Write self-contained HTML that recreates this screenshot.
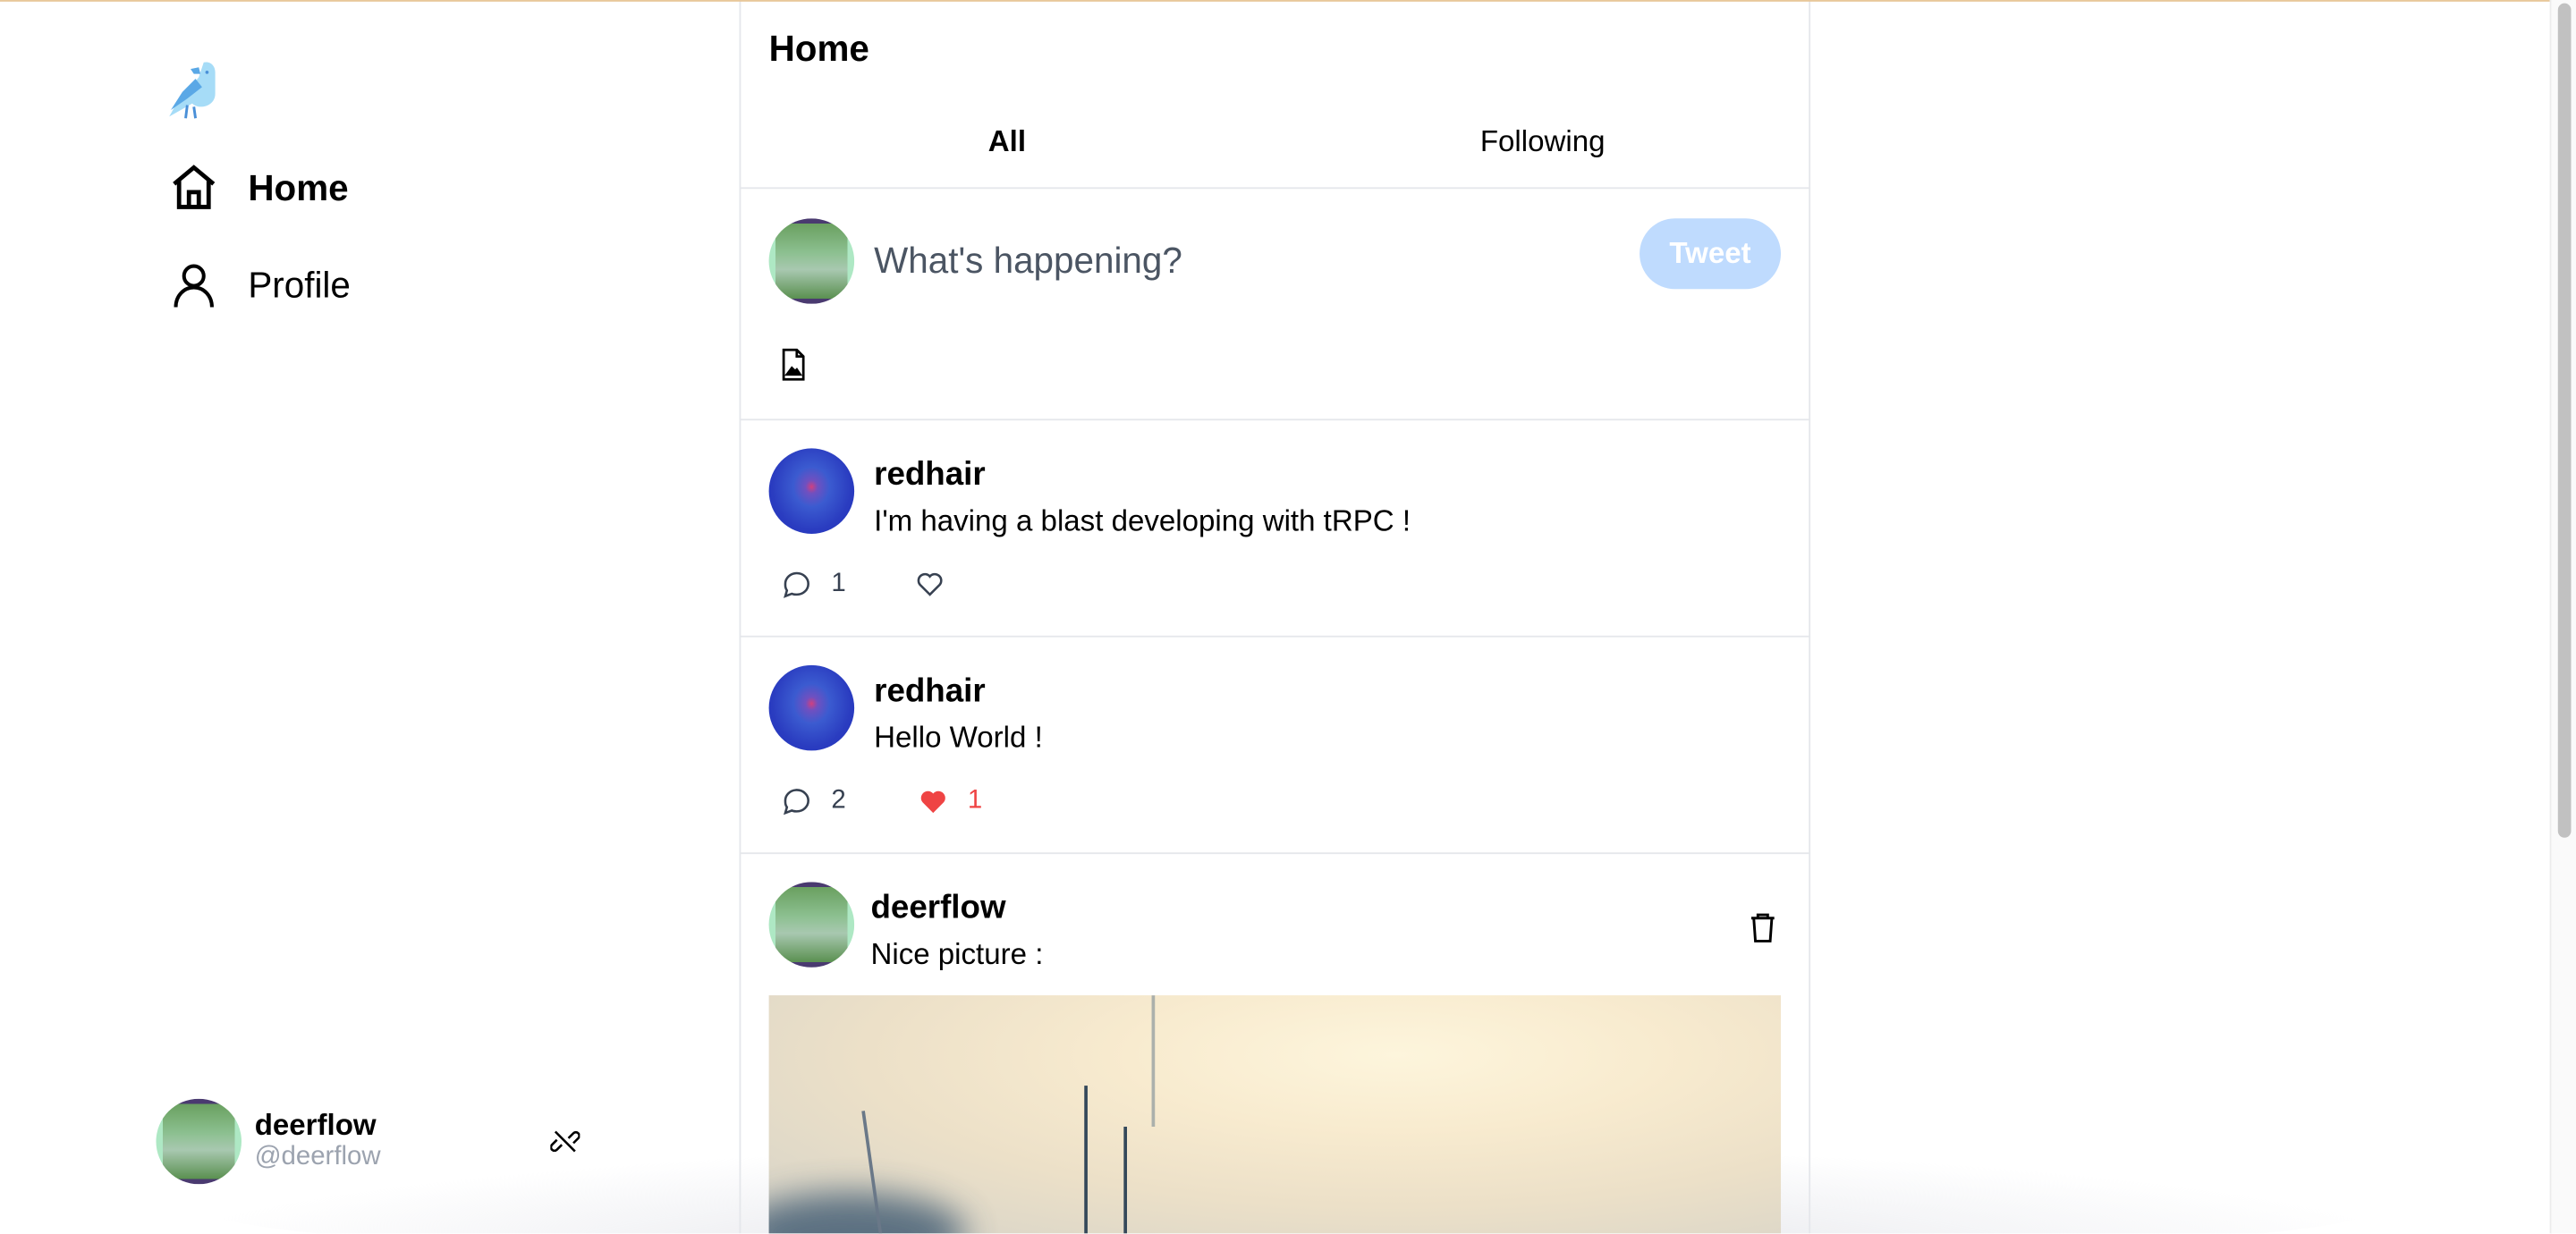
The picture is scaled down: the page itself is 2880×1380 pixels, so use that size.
<!DOCTYPE html>
<html><head><meta charset="utf-8"><style>
html,body{margin:0;padding:0;width:2880px;height:1380px;overflow:hidden;background:#fff;}
#w{position:absolute;left:0;top:0;width:1568px;height:751px;transform:scale(1.83674);transform-origin:0 0;font-family:"Liberation Sans",sans-serif;color:#000;overflow:hidden;}
.a{position:absolute;}
.av{position:absolute;width:52px;height:52px;border-radius:50%;overflow:hidden;}
.green{background:linear-gradient(90deg,#aee8c4 0,#aee8c4 8%,transparent 8%,transparent 92%,#aee8c4 92%),linear-gradient(#4a3a70 0,#4a3a70 6%,#6aa060 6%,#8cc090 40%,#a8c8b0 60%,#5a9050 94%,#4a3a70 94%);}
.blue{background:radial-gradient(ellipse at 50% 45%,#d04080 0,#7050c0 10%,#3b5bd0 30%,#2a3cc0 65%,#2233bb 100%);}
.hl{position:absolute;left:450px;width:652px;height:1px;background:#e5e7eb;}
</style></head><body><div id="w">
<!-- bird -->
<svg class="a" style="left:102px;top:37px" width="34" height="37" viewBox="0 0 34 37"><path d="M22 1c4-1 7 2 7 6v13c0 5-4 8-9 8-2 0-4-1-5-2L1 34l5-9 8-9 5-6z" fill="#a6dcf7"/><path d="M19 4l-5 1 2 3 4 0z" fill="#5aa8e6"/><path d="M17 11l-8 8-7 11 10-7 9-7z" fill="#5aa8e6"/><path d="M12 27l-1 8M16 28l1 7" stroke="#4a90d8" stroke-width="1.6"/><circle cx="24" cy="7" r="1" fill="#4a90d8"/></svg>
<!-- home icon -->
<svg class="a" style="left:103px;top:100px" width="30" height="28" viewBox="0 0 30 28" fill="none" stroke="#000" stroke-width="2.6"><path d="M3 12L15 2l12 10M6 10v16h18V10M12 26v-9h6v9"/></svg>
<div class="a" style="left:151px;top:102px;font-size:22px;font-weight:bold">Home</div>
<svg class="a" style="left:105px;top:160px" width="26" height="28" viewBox="0 0 26 28" fill="none" stroke="#000" stroke-width="2.2"><circle cx="13" cy="8" r="6"/><path d="M2 27c0-7 5-12 11-12s11 5 11 12"/></svg>
<div class="a" style="left:151px;top:161px;font-size:22px">Profile</div>
<!-- bottom shading -->
<div class="a" style="left:120px;top:700px;width:1330px;height:70px;border-radius:50%;background:radial-gradient(ellipse at 50% 100%,rgba(215,216,222,.8) 0,rgba(235,236,240,.5) 50%,rgba(255,255,255,0) 75%)"></div>
<!-- bottom user -->
<div class="av green" style="left:95px;top:669px"></div>
<div class="a" style="left:155px;top:675px;font-size:18px;font-weight:bold">deerflow</div>
<div class="a" style="left:155px;top:696px;font-size:16px;color:#9ca3af">@deerflow</div>
<svg class="a" style="left:335px;top:686px" width="18" height="18" viewBox="0 0 18 18" fill="none" stroke="#000" stroke-width="1.4"><path d="M7 11l-3 3a2 2 0 0 1-3-3l3-3M11 7l3-3a2 2 0 0 1 3 3l-3 3M3 3l12 12"/></svg>
<!-- center column -->
<div class="a" style="left:450px;top:0;width:652px;height:606px;background:#fff"></div>
<div class="a" style="left:450px;top:0;width:1px;height:751px;background:#e5e7eb"></div>
<div class="a" style="left:1101px;top:0;width:1px;height:751px;background:#e5e7eb"></div>
<div class="a" style="left:0;top:0;width:1568px;height:1px;background:#e8c79a"></div>
<div class="a" style="left:468px;top:17px;font-size:22px;font-weight:bold">Home</div>
<div class="a" style="left:450px;top:76px;width:326px;text-align:center;font-size:18px;font-weight:bold">All</div>
<div class="a" style="left:776px;top:76px;width:326px;text-align:center;font-size:18px">Following</div>
<div class="hl" style="top:114px"></div>
<div class="av green" style="left:468px;top:133px"></div>
<div class="a" style="left:532px;top:146px;font-size:22px;color:#4b5563">What's happening?</div>
<div class="a" style="left:998px;top:133px;width:86px;height:43px;border-radius:22px;background:#bfdbfe;color:#fff;font-size:18px;font-weight:bold;text-align:center;line-height:43px">Tweet</div>
<svg class="a" style="left:475px;top:212px" width="16" height="20" viewBox="0 0 16 20" fill="none" stroke="#000" stroke-width="1.5"><path d="M2 1h8l4 4v14H2z M10 1v4h4"/><path d="M4 16l3-4 2 2 1-1 2 3z" fill="#000"/></svg>
<div class="hl" style="top:255px"></div>
<!-- tweet1 -->
<div class="av blue" style="left:468px;top:273px"></div>
<div class="a" style="left:532px;top:278px;font-size:20px;font-weight:bold">redhair</div>
<div class="a" style="left:532px;top:307px;font-size:18px">I'm having a blast developing with tRPC !</div>
<svg class="a" style="left:476px;top:347px" width="18" height="18" viewBox="0 0 18 18" fill="none" stroke="#374151" stroke-width="1.4"><path d="M9 2c4 0 7 3 7 6.5S13 15 9 15c-1 0-2 0-3-.5L2 16l1-3.5C2 11 2 10 2 8.5 2 5 5 2 9 2z"/></svg>
<div class="a" style="left:506px;top:347px;font-size:16px;color:#374151">1</div>
<svg class="a" style="left:558px;top:348px" width="16" height="15" viewBox="0 0 16 15" fill="none" stroke="#374151" stroke-width="1.4"><path d="M8 14L2 8a3.5 3.5 0 0 1 6-5 3.5 3.5 0 0 1 6 5z"/></svg>
<div class="hl" style="top:387px"></div>
<!-- tweet2 -->
<div class="av blue" style="left:468px;top:405px"></div>
<div class="a" style="left:532px;top:410px;font-size:20px;font-weight:bold">redhair</div>
<div class="a" style="left:532px;top:439px;font-size:18px">Hello World !</div>
<svg class="a" style="left:476px;top:479px" width="18" height="18" viewBox="0 0 18 18" fill="none" stroke="#374151" stroke-width="1.4"><path d="M9 2c4 0 7 3 7 6.5S13 15 9 15c-1 0-2 0-3-.5L2 16l1-3.5C2 11 2 10 2 8.5 2 5 5 2 9 2z"/></svg>
<div class="a" style="left:506px;top:479px;font-size:16px;color:#374151">2</div>
<svg class="a" style="left:559px;top:480px" width="18" height="16" viewBox="0 0 16 15"><path d="M8 14L2 8a3.5 3.5 0 0 1 6-5 3.5 3.5 0 0 1 6 5z" fill="#ef4444"/></svg>
<div class="a" style="left:589px;top:479px;font-size:16px;color:#ef4444">1</div>
<div class="hl" style="top:519px"></div>
<!-- tweet3 -->
<div class="av green" style="left:468px;top:537px"></div>
<div class="a" style="left:530px;top:542px;font-size:20px;font-weight:bold">deerflow</div>
<div class="a" style="left:530px;top:571px;font-size:18px">Nice picture :</div>
<svg class="a" style="left:1064px;top:555px" width="18" height="20" viewBox="0 0 18 20" fill="none" stroke="#000" stroke-width="1.6"><path d="M2 4h14M6 4V2h6v2M3.5 4l1 14h9l1-14"/></svg>
<div class="a" style="left:468px;top:606px;width:616px;height:145px;overflow:hidden;background:radial-gradient(ellipse at 62% 25%,#fdf5dc 0,#f8ebcf 30%,#ece0c8 60%,#d4d2c8 100%)">
<div class="a" style="left:-20px;top:120px;width:140px;height:50px;border-radius:50%;background:#3d5870;opacity:.8;filter:blur(10px)"></div>
<div class="a" style="left:192px;top:55px;width:2px;height:95px;background:#34485a"></div>
<div class="a" style="left:216px;top:80px;width:2px;height:70px;background:#34485a"></div>
<div class="a" style="left:233px;top:0;width:1.5px;height:80px;background:#7a8a94;opacity:.6"></div>
<div class="a" style="left:62px;top:70px;width:2px;height:80px;background:#6a7888;transform:rotate(-8deg)"></div>
</div>
<!-- scrollbar -->
<div class="a" style="left:1552px;top:0;width:16px;height:751px;background:#fafafa;border-left:1px solid #ececec"></div>
<div class="a" style="left:1557px;top:2px;width:8px;height:508px;border-radius:4px;background:#c1c1c1"></div>
</div></body></html>
